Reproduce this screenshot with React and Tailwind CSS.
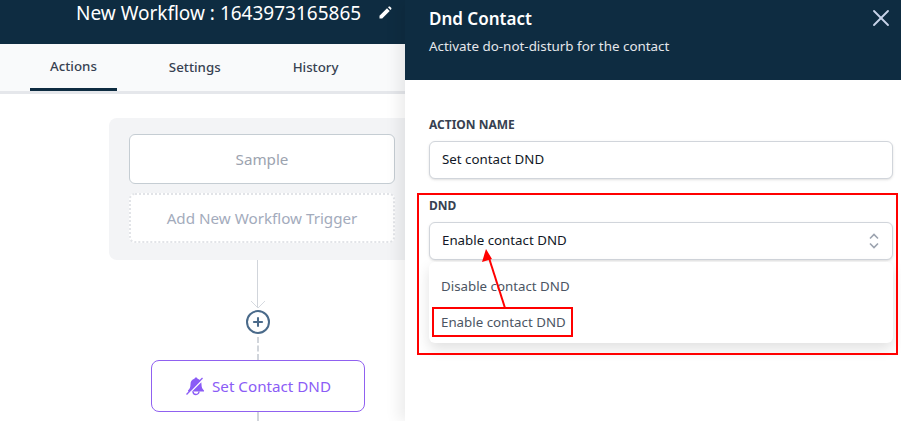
import { X, Plus } from 'lucide-react'

function Field({ label, children }) {
  return (
    <div>
      <div className="text-[12px] leading-[16px] font-bold uppercase text-[#374151]">{label}</div>
      {children}
    </div>
  )
}

function Box({ children, right }) {
  return (
    <div className="mt-2 h-[38px] flex items-center justify-between pl-[12px] pr-3 bg-white rounded-md border border-[#d1d5db] shadow-sm text-[13.3px] text-[#111827]">
      <span>{children}</span>
      {right}
    </div>
  )
}

function BellOff() {
  return (
    <svg width="20" height="20" viewBox="0 0 20 20">
      <path d="M11 1.500c1 0 1.500.7 1.500 1.300 2.600.7 4 2.800 4 5.400 0 3 .8 4.600 2.500 6.300v1H3v-1c1.700-1.700 2.500-3.300 2.500-6.300 0-2.600 1.400-4.700 4-5.400 0-.6.5-1.300 1.500-1.300z" fill="#8b5cf6" />
      <path d="M3 18.500L18.500 3" stroke="#fff" strokeWidth="1.600" />
      <path d="M1.500 18.500L17.500 2" stroke="#8b5cf6" strokeWidth="1.300" />
      <path d="M8 15.500a3 3 0 0 0 6 0" fill="none" stroke="#8b5cf6" strokeWidth="1.400" />
    </svg>
  )
}

function Pencil() {
  return (
    <svg width="13" height="13" viewBox="0 0 13 13" fill="#fff">
      <path d="M0.500 12.500V9.800L8 2.300l2.700 2.700L3.200 12.500z" />
      <path d="M9 1.300l.9-.8h1l1.500 1.500v1l-.8.900z" />
    </svg>
  )
}

function WorkflowCanvas() {
  return (
    <div className="flex-1 relative">
      <div className="mt-6 ml-[109px] w-[306px] h-[142px] bg-[#f3f4f6] rounded-lg p-5 pt-4 pb-0">
        <div className="h-[50px] rounded-md border border-[#c5cdd3] bg-white flex items-center justify-center text-[15.200px] text-[#9ca3af]">
          Sample
        </div>
        <div className="mt-[9px] h-[50px] rounded-md border-2 border-dotted border-[#e2e4e8] bg-white flex items-center justify-center text-[15.200px] text-[#a3abbc]">
          Add New Workflow Trigger
        </div>
      </div>

      <div className="ml-[151px] w-[214px] flex flex-col items-center">
        <div className="w-px h-[48px] -ml-px bg-[#d1d5db]" />
        <svg width="16" height="8" viewBox="0 0 16 8" className="-mt-[7px] -ml-px">
          <path d="M1 0l7 7 7-7" fill="none" stroke="#d6dae0" />
        </svg>
        <div className="w-[24px] h-[24px] mt-[1px] rounded-full border-[2.500px] border-[#4a6a8a] flex items-center justify-center bg-white">
          <Plus size={14} strokeWidth={3.500} className="text-[#4a6a8a]" />
        </div>
        <div className="h-[23px] w-0.5 mt-[3px] -ml-px border-l-2 border-dashed border-[#d1d5db]" />
        <div className="w-[214px] h-[52px] shrink-0 rounded-lg border border-[#9061f0] bg-white flex items-center justify-center gap-[7px] text-[15.200px] text-[#8b5cf6]">
          <BellOff />
          <span>Set Contact DND</span>
        </div>
        <div className="h-[9px] w-0.5 -ml-px border-l-2 border-dashed border-[#d1d5db]" />
      </div>
    </div>
  )
}

export default function App() {
  return (
    <div className="w-[901px] h-[421px] flex overflow-hidden bg-white font-['Noto_Sans',sans-serif]">
      <div className="w-[405px] shrink-0 flex flex-col overflow-hidden">
        <header className="h-[44px] shrink-0 bg-[#0e2c41] text-white pl-[76px] flex items-start">
          <span className="text-[19px] leading-[26px] whitespace-nowrap">New Workflow : 1643973165865</span>
          <span className="ml-[18px] mt-[6px]"><Pencil /></span>
        </header>
        <nav className="h-[50px] shrink-0 bg-[#f9fafb] border-b-[3px] border-[#e5e7eb] flex gap-8 pl-[30px] text-[13.300px] font-medium text-[#374151]">
          <div className="h-[47px] px-5 pt-[1px] flex items-center border-b-[3px] border-[#0e2c41]">Actions</div>
          <div className="h-[47px] px-5 pt-[1px] flex items-center">Settings</div>
          <div className="h-[47px] px-5 pt-[1px] flex items-center">History</div>
        </nav>
        <WorkflowCanvas />
      </div>

      <aside className="relative flex-1 flex flex-col bg-white shadow-[-6px_0_14px_rgba(0,0,0,0.08)]">
        <div className="h-[80px] shrink-0 bg-[#0e2c41] pl-6 pr-[6px] pt-[6px] flex justify-between">
          <div>
            <div className="text-[17px] leading-[26px] font-semibold text-white">Dnd Contact</div>
            <div className="mt-[5px] text-[13.400px] leading-[18px] text-[#e5e7eb]">Activate do-not-disturb for the contact</div>
          </div>
          <X size={28} strokeWidth={1.600} className="text-[#c7d2e8] -mt-[2px]" />
        </div>

        <div className="pl-6 pr-2 pt-[37px]">
          <Field label="ACTION NAME">
            <Box>Set contact DND</Box>
          </Field>
          <div className="mt-[19px]">
            <Field label="DND">
              <Box
                right={
                  <svg width="12" height="18" viewBox="0 0 12 18" fill="none" stroke="#9ca3af" strokeWidth="1.600">
                    <path d="M2 6.500L6 2.500l4 4M2 11.500l4 4 4-4" />
                  </svg>
                }
              >
                Enable contact DND
              </Box>
            </Field>
          </div>
          <div className="mt-[2px] h-[81px] rounded-md bg-white shadow-[0_6px_14px_rgba(0,0,0,0.12)] pl-3 text-[13.300px] text-[#4b5563]">
            <div className="h-[48px] flex items-center pt-[2px]">Disable contact DND</div>
            <div className="h-[26px] flex items-center">Enable contact DND</div>
          </div>
        </div>

        {/* red annotations drawn on the screenshot */}
        <div className="absolute left-[12px] top-[193px] w-[481px] h-[162px] border-2 border-[#ff0000]" />
        <div className="absolute left-[27px] top-[307px] w-[141px] h-[30px] border-2 border-[#ff0000]" />
        <svg className="absolute left-[70px] top-[245px]" width="40" height="66" viewBox="0 0 40 66">
          <path d="M30 63L14 13" stroke="#ff0000" strokeWidth="2" fill="none" />
          <path d="M11 4l-4 13 10-3z" fill="#ff0000" />
        </svg>
      </aside>
    </div>
  )
}
